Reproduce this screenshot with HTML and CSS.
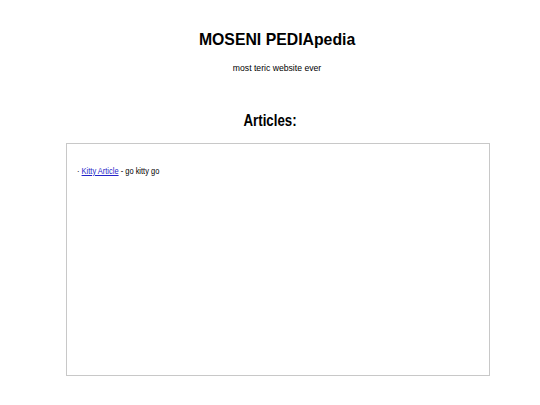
FILE: index.html
```html
<!DOCTYPE html>
<html>
<head>
<meta charset="utf-8">
<link rel="stylesheet" href="styles.css">
</head>
<body>
<header class="head">
  <h1 class="title"><span class="narrow title-text">MOSENI PEDIApedia</span></h1>
  <p class="tagline"><span class="narrow tagline-text">most teric website ever</span></p>
</header>
<h2 class="section"><span class="narrow section-text">Articles:</span></h2>
<div class="box">
  <p class="item"><span class="narrow item-text">· <a href="#" class="link">Kitty Article</a> - go kitty go</span></p>
</div>
</body>
</html>
```
FILE: styles.css
```css
body {
  margin: 0;
  background: #fff;
  font-family: "Liberation Sans", Arial, sans-serif;
  color: #000;
}
.narrow {
  display: inline-block;
  white-space: nowrap;
}
.head {
  text-align: center;
  padding: 30px 0 0 14px;
}
.title {
  margin: 0;
  font-size: 17px;
  font-weight: bold;
  line-height: 20px;
}
.title-text {
  transform: scaleX(0.93);
}
.tagline {
  margin: 13px 0 0;
  font-size: 9px;
  line-height: 10px;
}
.tagline-text {
  transform: scaleX(0.96);
}
.section {
  margin: 38px 0 0;
  text-align: center;
  font-size: 17px;
  line-height: 20px;
}
.section-text {
  transform: scaleX(0.78);
}
.box {
  margin: 12px 0 0 66px;
  width: 422px;
  height: 231px;
  border: 1px solid #c8c8c8;
}
.item {
  margin: 21px 0 0 10px;
  font-size: 8.5px;
  line-height: 12px;
}
.item-text {
  transform: scaleX(0.88);
  transform-origin: left center;
}
.link {
  color: #2323c8;
}
```
